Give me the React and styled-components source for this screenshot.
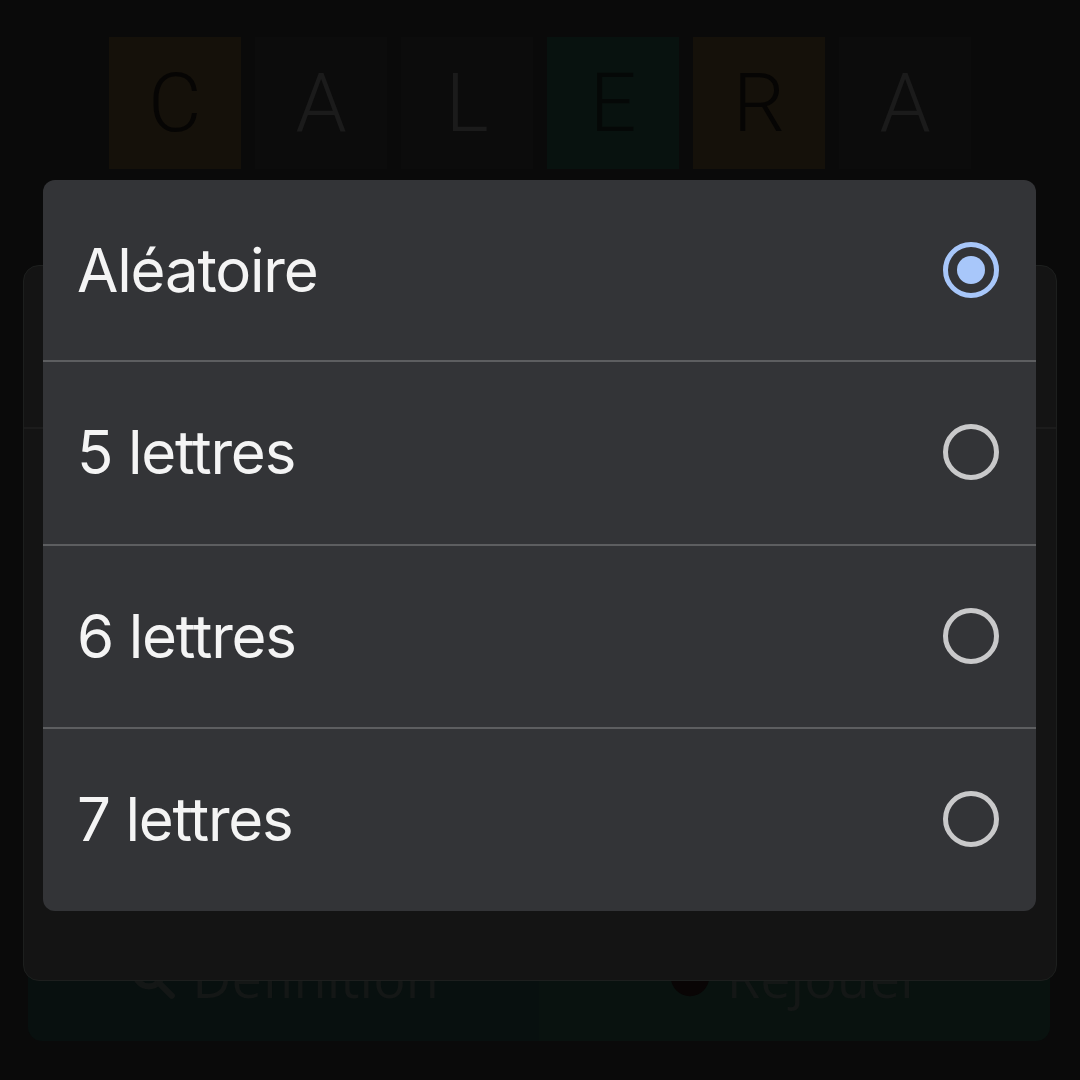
import React from "react";
import styled, { createGlobalStyle } from "styled-components";

const Global = createGlobalStyle`
  html, body { margin: 0; padding: 0; background: #0a0a0a; }
  * { box-sizing: border-box; }
`;

const Screen = styled.div`
  position: relative;
  width: 1080px;
  height: 1080px;
  overflow: hidden;
  background: #0a0a0a;
  display: flex;
  flex-direction: column;
  justify-content: space-between;
  font-family: Inter, "Noto Sans", sans-serif;
`;

const Board = styled.div`
  display: flex;
  justify-content: center;
  gap: 14px;
  padding-top: 37px;
`;

const tileColors = {
  present: { bg: "#15110a", fg: "#060504" },
  correct: { bg: "#08120f", fg: "#050807" },
  absent: { bg: "#0c0c0c", fg: "#1b1b1b" },
};

const Tile = styled.div`
  width: 132px;
  height: 132px;
  display: flex;
  align-items: center;
  justify-content: center;
  background: ${(p) => tileColors[p.$state].bg};
  color: ${(p) => tileColors[p.$state].fg};
  font-family: Roboto, "Liberation Sans", sans-serif;
  font-weight: 300;
  font-size: 82px;
  line-height: 1;
`;

const Actions = styled.div`
  display: flex;
  margin: 0 30px 39px 28px;
  height: 116px;
  border-radius: 14px;
  overflow: hidden;
`;

const ActionButton = styled.div`
  flex: 1;
  display: flex;
  align-items: center;
  justify-content: center;
  gap: 14px;
  padding-bottom: 12px;
  background: ${(p) => p.$bg};
  color: #141716;
  font-family: "Open Sans", sans-serif;
  font-size: 54px;
`;

const Backdrop = styled.div`
  position: absolute;
  left: 23px;
  top: 265px;
  width: 1034px;
  height: 716px;
  background: #141414;
  border: 1px solid #1d1f1e;
  border-radius: 16px;
`;

const BackdropHeader = styled.div`
  height: 163px;
  border-bottom: 2px solid #1c1c1c;
`;

const Dialog = styled.div`
  position: absolute;
  left: 43px;
  top: 180px;
  width: 993px;
  background: #333437;
  border-radius: 12px;
  overflow: hidden;
  display: flex;
  flex-direction: column;
`;

const Option = styled.div`
  height: 180px;
  display: flex;
  align-items: center;
  justify-content: space-between;
  padding: 0 37px 0 34px;
  & + & { border-top: 2px solid #5d5e60; height: 183.5px; padding-bottom: 1px; }
`;

const Label = styled.span`
  color: #f4f4f4;
  font-family: Inter, "Noto Sans", sans-serif;
  font-size: 60px;
  letter-spacing: -1.2px;
  line-height: 1;
`;

const Radio = styled.span`
  position: relative;
  width: 56px;
  height: 56px;
  border-radius: 50%;
  border: 5px solid ${(p) => (p.$checked ? "#a8c7fa" : "#c9c9ca")};
  &::after {
    content: "";
    display: ${(p) => (p.$checked ? "block" : "none")};
    position: absolute;
    left: 50%;
    top: 50%;
    width: 28px;
    height: 28px;
    margin: -14px 0 0 -14px;
    border-radius: 50%;
    background: #a8c7fa;
  }
`;

const letters = [
  ["C", "present"],
  ["A", "absent"],
  ["L", "absent"],
  ["E", "correct"],
  ["R", "present"],
  ["A", "absent"],
];

const options = ["Aléatoire", "5 lettres", "6 lettres", "7 lettres"];

export default function App() {
  return (
    <>
      <Global />
      <Screen>
        <Board>
          {letters.map(([l, s], i) => (
            <Tile key={i} $state={s}>{l}</Tile>
          ))}
        </Board>
        <Actions>
          <ActionButton $bg="#08100f">
            <svg width="50" height="50" viewBox="0 0 24 24" fill="none" stroke="#141716" strokeWidth="3" strokeLinecap="round">
              <circle cx="10" cy="10" r="6.5" />
              <path d="M15 15l6 6" />
            </svg>
            Définition
          </ActionButton>
          <ActionButton $bg="#09120f">
            <svg width="46" height="46" viewBox="0 0 24 24">
              <circle cx="12" cy="12" r="10" fill="#090505" />
            </svg>
            Rejouer
          </ActionButton>
        </Actions>
        <Backdrop>
          <BackdropHeader />
        </Backdrop>
        <Dialog>
          {options.map((o, i) => (
            <Option key={o}>
              <Label>{o}</Label>
              <Radio $checked={i === 0} />
            </Option>
          ))}
        </Dialog>
      </Screen>
    </>
  );
}
